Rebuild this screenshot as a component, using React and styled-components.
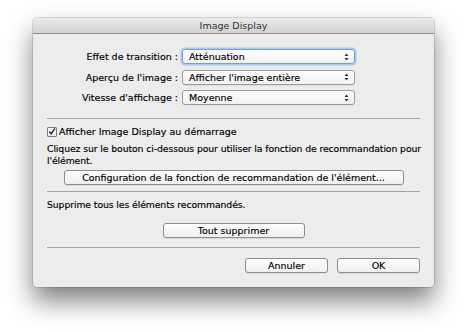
import React from 'react'
import styled, { createGlobalStyle } from 'styled-components'

const Global = createGlobalStyle`
  html, body {
    margin: 0;
    padding: 0;
    background: #ffffff;
  }
  body {
    font-family: "DejaVu Sans", "Liberation Sans", sans-serif;
    font-size: 9.5px;
    color: #000;
    -webkit-text-stroke: 0.15px #000;
  }
`

const Page = styled.div`
  width: 468px;
  height: 334px;
  padding-top: 18px;
  box-sizing: border-box;
`

const Window = styled.main`
  margin-left: 33px;
  width: 401px;
  height: 269px;
  background: #ececec;
  border-radius: 4px;
  box-shadow: 0 14px 26px rgba(0, 0, 0, 0.5), 0 0 0 1px rgba(0, 0, 0, 0.12);
  display: flex;
  flex-direction: column;
  overflow: hidden;
`

const TitleBar = styled.header`
  height: 15px;
  flex: none;
  background: linear-gradient(#ebebeb, #d2d2d2);
  border-bottom: 1px solid #8c8c8c;
  display: flex;
  align-items: center;
  justify-content: center;
  color: #333;
  -webkit-text-stroke: 0;
`

const Body = styled.div`
  padding: 15px 14px 0 14px;
  display: flex;
  flex-direction: column;
`

const Form = styled.div`
  display: grid;
  grid-template-columns: 131px 173px;
  column-gap: 4px;
  row-gap: 5.5px;
`

const Label = styled.label`
  text-align: right;
  line-height: 15px;
  white-space: nowrap;
`

const Select = styled.div`
  height: 15px;
  box-sizing: border-box;
  border: 1px solid ${p => (p.$focus ? '#6f9fd6' : '#9c9c9c')};
  border-radius: 3px;
  background: linear-gradient(#ffffff, #f1f1f1);
  box-shadow: ${p => (p.$focus ? '0 0 0 1.5px #a9c9ee' : '0 1px 0 rgba(0,0,0,0.06)')};
  padding: 0 5px 0 6px;
  display: flex;
  align-items: center;
  justify-content: space-between;
  white-space: nowrap;
`

const Arrows = () => (
  <svg width="5" height="8" viewBox="0 0 5 8">
    <path d="M0.5 3 L2.5 0.5 L4.5 3 Z" fill="#333" />
    <path d="M0.5 5 L2.5 7.5 L4.5 5 Z" fill="#333" />
  </svg>
)

const Separator = styled.hr`
  margin: ${p => p.$top || 0}px 0 0 0;
  border: none;
  border-top: 1px solid #a3a3a3;
  height: 0;
`

const CheckRow = styled.div`
  display: flex;
  align-items: center;
  gap: 2px;
  margin-top: 7px;
  line-height: 11px;
`

const Box = styled.span`
  width: 10px;
  height: 10px;
  box-sizing: border-box;
  border: 1px solid #7a7a7a;
  border-radius: 1px;
  background: linear-gradient(#ffffff, #e6e6e6);
  display: flex;
  align-items: center;
  justify-content: center;
`

const Text = styled.p`
  margin: ${p => p.$top || 0}px -6px 0 0;
  line-height: 12px;
  font-size: 9.3px;
  letter-spacing: -0.1px;
`

const Button = styled.button`
  font-family: inherit;
  font-size: 9.5px;
  color: #000;
  -webkit-text-stroke: 0.15px #000;
  height: 15px;
  box-sizing: border-box;
  width: ${p => p.$w}px;
  padding: 0;
  border: 1px solid #8e8e8e;
  border-radius: 3px;
  background: linear-gradient(#ffffff, #f0f0f0);
  box-shadow: 0 1px 0 rgba(0, 0, 0, 0.08);
`

const ButtonRow = styled.div`
  display: flex;
  justify-content: ${p => p.$justify || 'center'};
  gap: 9px;
  margin-top: ${p => p.$top || 0}px;
`

export default function App() {
  return (
    <Page>
      <Global />
      <Window>
        <TitleBar>Image Display</TitleBar>
        <Body>
          <Form>
            <Label>Effet de transition :</Label>
            <Select $focus>Atténuation<Arrows /></Select>
            <Label>Aperçu de l'image :</Label>
            <Select>Afficher l'image entière<Arrows /></Select>
            <Label>Vitesse d'affichage :</Label>
            <Select>Moyenne<Arrows /></Select>
          </Form>
          <Separator $top={13} />
          <CheckRow>
            <Box>
              <svg width="9" height="9" viewBox="0 0 9 9">
                <path d="M1.5 4.5 L3.6 7 L7.8 1" stroke="#1d2b4a" strokeWidth="1.6" fill="none" />
              </svg>
            </Box>
            Afficher Image Display au démarrage
          </CheckRow>
          <Text $top={6}>
            Cliquez sur le bouton ci-dessous pour utiliser la fonction de recommandation pour
            <br />
            l'élément.
          </Text>
          <ButtonRow $top={3}>
            <Button $w={340}>Configuration de la fonction de recommandation de l'élément...</Button>
          </ButtonRow>
          <Separator $top={6} />
          <Text $top={7}>Supprime tous les éléments recommandés.</Text>
          <ButtonRow $top={12}>
            <Button $w={142}>Tout supprimer</Button>
          </ButtonRow>
          <Separator $top={9} />
          <ButtonRow $top={10} $justify="flex-end">
            <Button $w={83}>Annuler</Button>
            <Button $w={83}>OK</Button>
          </ButtonRow>
        </Body>
      </Window>
    </Page>
  )
}
